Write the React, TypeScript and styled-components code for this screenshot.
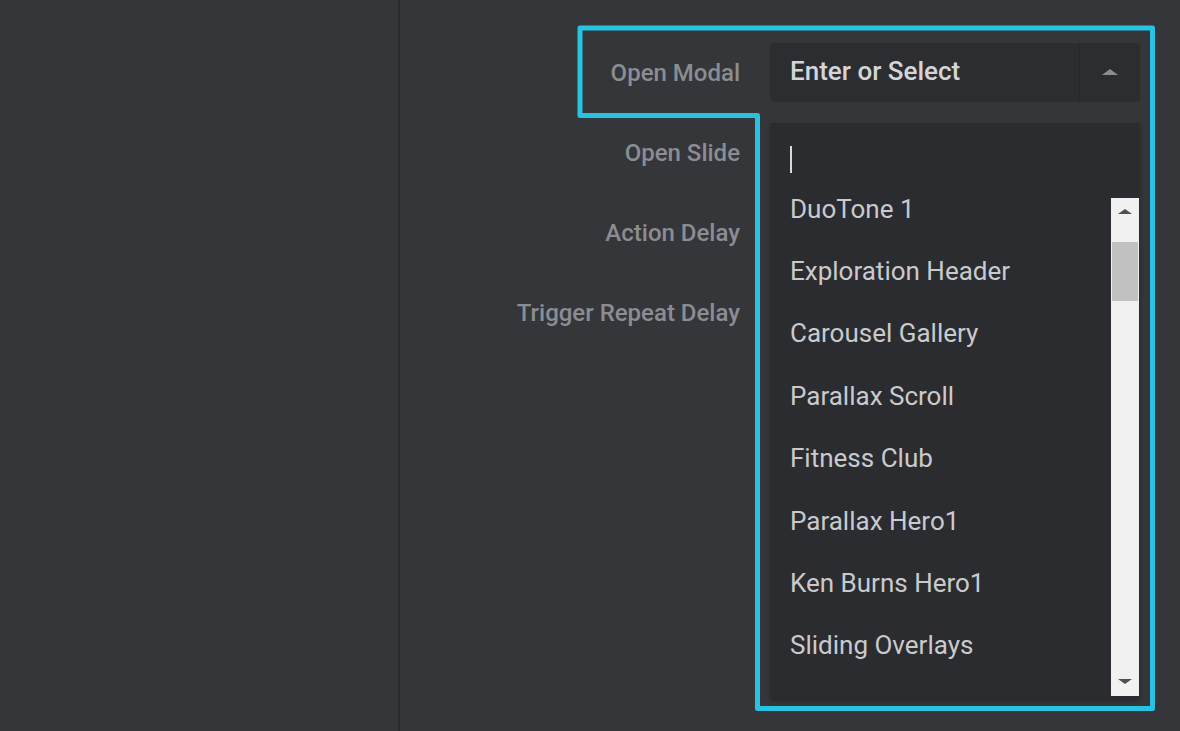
import React from "react";
import styled, { createGlobalStyle } from "styled-components";

const GlobalStyle = createGlobalStyle`
  html, body {
    margin: 0;
    padding: 0;
    background: #35363a;
    font-family: Roboto, "Noto Sans", sans-serif;
  }
  #root {
    min-height: 731px;
  }
`;

const Page = styled.div`
  display: flex;
  height: 731px;
  overflow: hidden;
  position: relative;
`;

const SidePanel = styled.aside`
  width: 398px;
  flex-shrink: 0;
  background: #35363a;
  border-right: 2px solid #2a2b2f;
`;

const Main = styled.main`
  flex: 1;
  padding-top: 33px;
`;

const Form = styled.div`
  display: grid;
  grid-template-columns: 340px 370px;
  grid-auto-rows: 80px;
  column-gap: 30px;
`;

const Label = styled.div`
  display: flex;
  align-items: center;
  justify-content: flex-end;
  height: 80px;
  color: #8a8d92;
  font-size: 24px;
  font-weight: 500;
`;

const Cell = styled.div`
  display: flex;
  align-items: center;
  margin-top: -2px;
`;

const SelectWrap = styled.div`
  position: relative;
  width: 100%;
`;

const SelectBox = styled.div`
  display: flex;
  height: 59px;
  background: #2c2d31;
  border-radius: 4px;
  overflow: hidden;
`;

const SelectValue = styled.div`
  flex: 1;
  display: flex;
  align-items: center;
  padding-left: 20px;
  padding-bottom: 2px;
  color: #d4d5d8;
  font-size: 26px;
  font-weight: 500;
`;

const ArrowButton = styled.div`
  width: 60px;
  border-left: 1px solid #26272a;
  display: flex;
  align-items: center;
  justify-content: center;
`;

const Triangle = styled.span<{ $down?: boolean; $color: string; $size: number }>`
  width: 0;
  height: 0;
  border-left: ${(p) => p.$size}px solid transparent;
  border-right: ${(p) => p.$size}px solid transparent;
  ${(p) =>
    p.$down
      ? `border-top: ${Math.round(p.$size * 0.75)}px solid ${p.$color};`
      : `border-bottom: ${Math.round(p.$size * 0.75)}px solid ${p.$color};`}
`;

const Dropdown = styled.div`
  position: absolute;
  top: 80px;
  left: 0;
  width: 370px;
  height: 575px;
  background: #2b2c30;
  box-shadow: 0 3px 4px rgba(0, 0, 0, 0.25);
  display: flex;
  flex-direction: column;
  z-index: 2;
`;

const SearchArea = styled.div`
  height: 55px;
  padding: 23px 20px 0;
  box-sizing: border-box;
`;

const Caret = styled.span`
  display: block;
  width: 2px;
  height: 27px;
  background: #d8d9db;
`;

const ListArea = styled.div`
  display: flex;
  height: 518px;
  overflow: hidden;
`;

const Options = styled.ul`
  list-style: none;
  margin: 0;
  padding: 0;
  flex: 1;
`;

const Option = styled.li`
  height: 62.4px;
  display: flex;
  align-items: center;
  padding-left: 20px;
  color: #c9cacd;
  font-size: 26px;
  white-space: nowrap;
`;

const Scrollbar = styled.div`
  width: 28px;
  margin-top: 20px;
  margin-right: 1px;
  background: #f1f1f1;
  display: flex;
  flex-direction: column;
  align-items: center;
`;

const ScrollArrow = styled.div`
  height: 28px;
  width: 100%;
  display: flex;
  align-items: center;
  justify-content: center;
`;

const ScrollTrack = styled.div`
  flex: 1;
  width: 100%;
  padding: 16px 1px 0;
  box-sizing: border-box;
`;

const Thumb = styled.div`
  height: 59px;
  background: #c1c1c1;
`;

const Highlight = styled.svg`
  position: absolute;
  left: 0;
  top: 0;
  pointer-events: none;
  z-index: 5;
`;

const items = [
  "DuoTone 1",
  "Exploration Header",
  "Carousel Gallery",
  "Parallax Scroll",
  "Fitness Club",
  "Parallax Hero1",
  "Ken Burns Hero1",
  "Sliding Overlays",
];

export default function App() {
  return (
    <>
      <GlobalStyle />
      <Page>
        <SidePanel />
        <Main>
          <Form>
            <Label>Open Modal</Label>
            <Cell>
              <SelectWrap>
                <SelectBox>
                  <SelectValue>Enter or Select</SelectValue>
                  <ArrowButton>
                    <Triangle $color="#8b8c8f" $size={8} />
                  </ArrowButton>
                </SelectBox>
                <Dropdown>
                  <SearchArea>
                    <Caret />
                  </SearchArea>
                  <ListArea>
                    <Options>
                      {items.map((name) => (
                        <Option key={name}>{name}</Option>
                      ))}
                    </Options>
                    <Scrollbar>
                      <ScrollArrow>
                        <Triangle $color="#505050" $size={7} />
                      </ScrollArrow>
                      <ScrollTrack>
                        <Thumb />
                      </ScrollTrack>
                      <ScrollArrow>
                        <Triangle $down $color="#505050" $size={7} />
                      </ScrollArrow>
                    </Scrollbar>
                  </ListArea>
                </Dropdown>
              </SelectWrap>
            </Cell>
            <Label>Open Slide</Label>
            <Cell />
            <Label>Action Delay</Label>
            <Cell />
            <Label>Trigger Repeat Delay</Label>
            <Cell />
          </Form>
        </Main>
        <Highlight width="1180" height="731" viewBox="0 0 1180 731">
          <path
            d="M580 28 H1152.5 V708.5 H757.5 V115.5 H580 Z"
            fill="none"
            stroke="#27c3e0"
            strokeWidth="5"
            strokeLinejoin="round"
          />
        </Highlight>
      </Page>
    </>
  );
}
